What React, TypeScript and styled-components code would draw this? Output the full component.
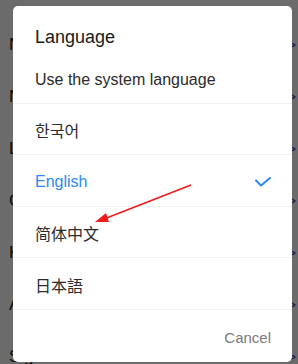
import React from 'react';
import styled, { createGlobalStyle } from 'styled-components';

// ============= 全域樣式 =============

const GlobalStyle = createGlobalStyle`
  html, body {
    margin: 0;
    padding: 0;
    background: #ffffff;
  }
  body {
    font-family: "Liberation Sans", Arial, "Noto Sans CJK SC", sans-serif;
  }
`;

// ============= 資料 =============

const backgroundRows = ['Notifications', 'Network', 'Language', 'Cache', 'Keyboard', 'About', 'Sign out'];

const languages = [
  { label: '한국어', lang: 'ko' },
  { label: 'English', lang: 'en', selected: true },
  { label: '简体中文', lang: 'zh' },
  { label: '日本語', lang: 'ja' },
];

// ============= 樣式定義 =============

const Screen = styled.div`
  position: relative;
  width: 298px;
  height: 364px;
  overflow: hidden;
  background: #ffffff;
`;

const SettingsList = styled.div`
  display: flex;
  flex-direction: column;
  padding-top: 19px;
`;

const SettingsRow = styled.div`
  display: flex;
  align-items: center;
  justify-content: space-between;
  height: 52px;
  padding: 0 2px 0 9px;
  font-size: 17px;
  color: #222;
`;

const Chevron = styled.span`
  color: #1d3fa8;
  font-size: 14px;
  line-height: 1;
`;

const Overlay = styled.div`
  position: absolute;
  inset: 0;
  background: rgba(0, 0, 0, 0.58);
`;

const Dialog = styled.div`
  position: absolute;
  left: 13px;
  top: 6px;
  width: 279px;
  height: 356px;
  background: #ffffff;
  border-radius: 5px;
  display: flex;
  flex-direction: column;
  overflow: hidden;
`;

const Title = styled.div`
  height: 46px;
  box-sizing: border-box;
  padding: 19px 22px 0;
  font-size: 18px;
  line-height: 24px;
  color: #1a1a1a;
`;

const OptionRow = styled.div<{ $active?: boolean; $cjk?: boolean; $shift?: number }>`
  display: flex;
  align-items: center;
  justify-content: space-between;
  height: 51.6px;
  box-sizing: border-box;
  padding: ${p => p.$shift ?? 4}px 21px 0 22px;
  font-size: 16px;
  color: ${p => (p.$active ? '#2a8af4' : '#2b2b2b')};
  font-family: ${p =>
    p.$cjk
      ? '"Noto Sans CJK SC", "Noto Sans CJK KR", "Noto Sans CJK JP", sans-serif'
      : '"Liberation Sans", Arial, sans-serif'};
  border-bottom: 1px solid #f1f1f1;
`;

const Footer = styled.div`
  flex: 1;
  display: flex;
  align-items: center;
  justify-content: flex-end;
  padding: 4px 21px 0 0;
`;

const CancelButton = styled.button`
  border: none;
  background: none;
  padding: 0;
  font-family: "Liberation Sans", Arial, sans-serif;
  font-size: 15px;
  color: #7a7a7a;
`;

const ArrowLayer = styled.svg`
  position: absolute;
  left: 0;
  top: 0;
  pointer-events: none;
`;

// ============= 組件實現 =============

const CheckIcon = () => (
  <svg width="16" height="10" viewBox="0 0 16 10">
    <path d="M1 3.5 L6 8.5 L15 1" fill="none" stroke="#2a8af4" strokeWidth="2" strokeLinecap="round" strokeLinejoin="round" />
  </svg>
);

export default function App() {
  return (
    <Screen>
      <GlobalStyle />

      {/* 背景設定頁 */}
      <SettingsList>
        {backgroundRows.map(row => (
          <SettingsRow key={row}>
            <span>{row}</span>
            <Chevron>&gt;</Chevron>
          </SettingsRow>
        ))}
      </SettingsList>

      <Overlay>
        <Dialog>
          <Title>Language</Title>
          <OptionRow $shift={6}>Use the system language</OptionRow>
          {languages.map(item => (
            <OptionRow
              key={item.lang}
              $active={item.selected}
              $cjk={item.lang !== 'en'}
              $shift={item.lang === 'en' ? 4 : 2}
            >
              <span>{item.label}</span>
              {item.selected && <CheckIcon />}
            </OptionRow>
          ))}
          <Footer>
            <CancelButton>Cancel</CancelButton>
          </Footer>
        </Dialog>
      </Overlay>

      {/* 標註箭頭 */}
      <ArrowLayer width="298" height="364" viewBox="0 0 298 364">
        <line x1="191" y1="185" x2="104" y2="219" stroke="#f01c1c" strokeWidth="1.6" />
        <polygon points="95,222 106,213 109,222" fill="#f01c1c" />
      </ArrowLayer>
    </Screen>
  );
}
